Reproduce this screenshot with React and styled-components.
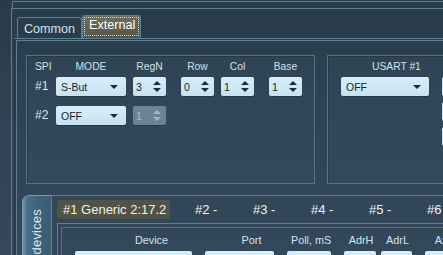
import React from 'react'
import styled, { createGlobalStyle } from 'styled-components'

const GlobalStyle = createGlobalStyle`
	html, body {
		margin: 0;
		padding: 0;
		background: #293e4d;
		overflow: hidden;
	}
	body {
		width: 443px;
		height: 255px;
		font-family: 'Liberation Sans', Arial, sans-serif;
	}
`

const LINE = '#5f7e90'

const spiRows = [
	{ id: '#1', mode: 'S-But', regn: '3', row: '0', col: '1', base: '1' },
	{ id: '#2', mode: 'OFF', regn: '1', disabled: true },
]

const devTabs = ['#2 -', '#3 -', '#4 -', '#5 -', '#6 -']

const devCols = [
	{ name: 'Device', width: 117, shift: 18 },
	{ name: 'Port', width: 69, shift: 12 },
	{ name: 'Poll, mS', width: 44, shift: 2 },
	{ name: 'AdrH', width: 32, shift: 1 },
	{ name: 'AdrL', width: 31, shift: 1 },
	{ name: 'Axis', width: 40, shift: 0 },
]

const App = () => {
	return (
		<Screen>
			<GlobalStyle />
			<TopStrip />
			<Frame>
				<TabBar>
					<Tab>Common</Tab>
					<Tab $active>External</Tab>
				</TabBar>
				<TabPanel>
					<GroupRow>
						<SpiGroup>
							<SpiGrid>
								<Head>SPI</Head>
								<Head $center $shift={9}>MODE</Head>
								<Head $center>RegN</Head>
								<Head $center>Row</Head>
								<Head $center>Col</Head>
								<Head $center>Base</Head>
								{spiRows.map((r) => (
									<React.Fragment key={r.id}>
										<RowLabel>{r.id}</RowLabel>
										<Select $width={70}>
											<span>{r.mode}</span>
											<Caret />
										</Select>
										<Spinner value={r.regn} disabled={r.disabled} />
										{r.row ? <Spinner value={r.row} /> : <span />}
										{r.col ? <Spinner value={r.col} /> : <span />}
										{r.base ? <Spinner value={r.base} /> : <span />}
									</React.Fragment>
								))}
							</SpiGrid>
						</SpiGroup>
						<UsartGroup>
							<UsartCol>
								<UsartLabel>USART #1</UsartLabel>
								<Select $width={88}>
									<span>OFF</span>
									<Caret />
								</Select>
							</UsartCol>
							<EdgeCol>
								<EdgeBox />
								<EdgeBox />
								<EdgeBox />
							</EdgeCol>
						</UsartGroup>
					</GroupRow>
					<DevicesArea>
						<VTab>
							<span>devices</span>
						</VTab>
						<DevPanel>
							<DevTabs>
								<DevTab $active>#1 Generic 2:17.2</DevTab>
								{devTabs.map((t) => (
									<DevTab key={t}>{t}</DevTab>
								))}
							</DevTabs>
							<DevBody>
								<DevInner>
									<DevGrid>
										{devCols.map((c) => (
											<ColHead key={c.name} $width={c.width} $shift={c.shift}>
												{c.name}
											</ColHead>
										))}
										{devCols.map((c) => (
											<Field key={c.name} $width={c.width} />
										))}
									</DevGrid>
								</DevInner>
							</DevBody>
						</DevPanel>
					</DevicesArea>
				</TabPanel>
			</Frame>
		</Screen>
	)
}

const Spinner = ({ value, disabled }) => (
	<SpinBox $disabled={disabled}>
		<span>{value}</span>
		<Arrows $disabled={disabled}>
			<Up />
			<Down />
		</Arrows>
	</SpinBox>
)

const Screen = styled.div`
	width: 443px;
	height: 255px;
	overflow: hidden;
	background: linear-gradient(180deg, #273b49 0%, #2d4354 40%, #33495b 100%);
`

const TopStrip = styled.div`
	margin: 1px 0 0 12px;
	height: 6px;
	border-top: 1px solid ${LINE};
	border-left: 1px solid ${LINE};
`

const Frame = styled.div`
	margin-left: 11px;
	border-top: 1px solid ${LINE};
	border-left: 1px solid ${LINE};
	height: 260px;
	overflow: hidden;
`

const TabBar = styled.div`
	display: flex;
	align-items: flex-end;
	height: 29px;
	padding-left: 5px;
	box-sizing: border-box;
`

const Tab = styled.div`
	height: ${(p) => (p.$active ? 23 : 21)}px;
	box-sizing: border-box;
	padding: ${(p) => (p.$active ? '1px 5px 0 6px' : '3px 6px 0 6px')};
	font-size: 12.6px;
	line-height: 17px;
	color: ${(p) => (p.$active ? '#ffffff' : '#d3e3ec')};
	border: 1px solid ${LINE};
	border-bottom: none;
	border-radius: 3px 3px 0 0;
	background: ${(p) =>
		p.$active ? 'linear-gradient(180deg, #6d6d60 0%, #54564b 100%)' : 'transparent'};
	outline: ${(p) => (p.$active ? '1px dotted #d8d6c4' : 'none')};
	outline-offset: -3px;
`

const TabPanel = styled.div`
	margin-left: 2px;
	border-top: 1px solid ${LINE};
	border-left: 1px solid #243644;
	box-shadow: inset 1px 1px 0 #2a3e4d, inset 2px 2px 0 ${LINE};
	padding: 16px 0 0 7px;
	height: 240px;
	box-sizing: border-box;
`

const GroupRow = styled.div`
	display: flex;
	gap: 12px;
	padding-left: 4px;
`

const GroupBox = styled.div`
	flex-shrink: 0;
	height: 129px;
	box-sizing: border-box;
	border: 1px solid #557385;
	background: rgba(60, 84, 102, 0.25);
	box-shadow: inset 1px 1px 0 rgba(20, 35, 45, 0.35);
`

const SpiGroup = styled(GroupBox)`
	width: 289px;
	padding: 4px 0 0 8px;
`

const SpiGrid = styled.div`
	display: grid;
	grid-template-columns: 21px 77px 48px 40px 48px 33px;
	grid-template-rows: 13px 19px 19px;
	row-gap: 4px;
	& > :nth-child(n + 13) {
		margin-top: 6px;
	}
`

const Head = styled.div`
	width: ${(p) => (p.$center ? '33px' : 'auto')};
	font-size: 10.3px;
	line-height: 13px;
	color: #cfe0ea;
	text-align: ${(p) => (p.$center ? 'center' : 'left')};
	white-space: nowrap;
	margin-left: ${(p) => (p.$shift ? `${p.$shift}px` : '0')};
	${(p) => (p.$shift ? 'width: 52px;' : '')}
`

const RowLabel = styled.div`
	font-size: 12px;
	line-height: 19px;
	color: #d8e6ee;
`

const Select = styled.div`
	width: ${(p) => p.$width}px;
	height: 19px;
	box-sizing: border-box;
	display: flex;
	align-items: center;
	justify-content: space-between;
	padding: 0 8px 0 5px;
	border-radius: 2px;
	background: linear-gradient(180deg, #d8eef9 0%, #c6e2f1 100%);
	box-shadow: 0 1px 0 rgba(15, 30, 40, 0.35);
	font-size: 10.5px;
	color: #14232e;
`

const Caret = styled.i`
	width: 0;
	height: 0;
	border-left: 4px solid transparent;
	border-right: 4px solid transparent;
	border-top: 4px solid #1c2a33;
`

const SpinBox = styled.div`
	width: 33px;
	height: 19px;
	box-sizing: border-box;
	display: flex;
	align-items: center;
	justify-content: space-between;
	padding: 0 5px 0 3px;
	border-radius: 2px;
	background: ${(p) =>
		p.$disabled ? '#6a8495' : 'linear-gradient(180deg, #d8eef9 0%, #c6e2f1 100%)'};
	box-shadow: 0 1px 0 rgba(15, 30, 40, 0.35);
	font-size: 10.5px;
	color: ${(p) => (p.$disabled ? '#a9bfcc' : '#14232e')};
`

const Arrows = styled.div`
	display: flex;
	flex-direction: column;
	gap: 3px;
	--c: ${(p) => (p.$disabled ? '#a3b8c5' : '#1c2a33')};
`

const Up = styled.i`
	width: 0;
	height: 0;
	border-left: 4px solid transparent;
	border-right: 4px solid transparent;
	border-bottom: 4px solid var(--c);
`

const Down = styled(Up)`
	border-bottom: none;
	border-top: 4px solid var(--c);
`

const UsartGroup = styled(GroupBox)`
	width: 160px;
	display: flex;
	gap: 13px;
	padding: 4px 0 0 13px;
`

const UsartCol = styled.div`
	display: flex;
	flex-direction: column;
	gap: 4px;
`

const UsartLabel = styled.div`
	font-size: 10.3px;
	line-height: 13px;
	color: #d3e3ec;
	padding-left: 31px;
`

const EdgeCol = styled.div`
	display: flex;
	flex-direction: column;
	gap: 6px;
	padding-top: 17px;
`

const EdgeBox = styled.div`
	width: 40px;
	height: 19px;
	border-radius: 2px;
	background: #c9e4f2;
`

const DevicesArea = styled.div`
	display: flex;
	margin-top: 11px;
	height: 70px;
`

const VTab = styled.div`
	flex-shrink: 0;
	width: 29px;
	box-sizing: border-box;
	border-radius: 7px 0 0 0;
	border-top: 1px solid #7c9aab;
	background: linear-gradient(90deg, #7b9cb0 0%, #4b6f86 18%, #3f6279 60%, #3b5c72 100%);
	display: flex;
	justify-content: center;
	align-items: flex-start;
	span {
		writing-mode: vertical-rl;
		transform: rotate(180deg);
		font-size: 13px;
		line-height: 15px;
		color: #dde9f0;
		margin-top: 13px;
		letter-spacing: 0.2px;
	}
`

const DevPanel = styled.div`
	flex: 1;
	min-width: 0;
	border-top: 1px solid ${LINE};
	border-left: 1px solid ${LINE};
`

const DevTabs = styled.div`
	display: flex;
	padding: 4px 0 0 5px;
	height: 27px;
	box-sizing: border-box;
`

const DevTab = styled.div`
	flex-shrink: 0;
	height: 19px;
	box-sizing: border-box;
	font-size: 13px;
	line-height: 19px;
	white-space: nowrap;
	color: #eef3f6;
	${(p) =>
		p.$active
			? `
		padding: 0 4px 0 6px;
		width: 113px;
		background: #4f5447;
		border-radius: 2px;
		color: #f3f2e8;
	`
			: `
		width: 58px;
		padding-left: 25px;
	`}
`

const DevBody = styled.div`
	margin-left: 5px;
	border-top: 1px solid ${LINE};
	border-left: 1px solid ${LINE};
	height: 40px;
`

const DevInner = styled.div`
	margin: 3px 0 0 3px;
	border-top: 1px solid #557385;
	border-left: 1px solid #557385;
	height: 40px;
	padding: 6px 0 0 13px;
`

const DevGrid = styled.div`
	display: grid;
	grid-template-columns: repeat(6, auto);
	justify-content: start;
	column-gap: 13px;
	row-gap: 4px;
	& > :nth-child(5),
	& > :nth-child(11) {
		margin-left: -8px;
	}
`

const ColHead = styled.div`
	width: ${(p) => p.$width}px;
	padding-left: ${(p) => p.$shift * 2}px;
	box-sizing: border-box;
	text-align: center;
	font-size: 10.8px;
	line-height: 13px;
	color: #d3e3ec;
	white-space: nowrap;
`

const Field = styled.div`
	width: ${(p) => p.$width}px;
	height: 19px;
	border-radius: 2px;
	background: linear-gradient(180deg, #d8eef9 0%, #c6e2f1 100%);
`

export default App
